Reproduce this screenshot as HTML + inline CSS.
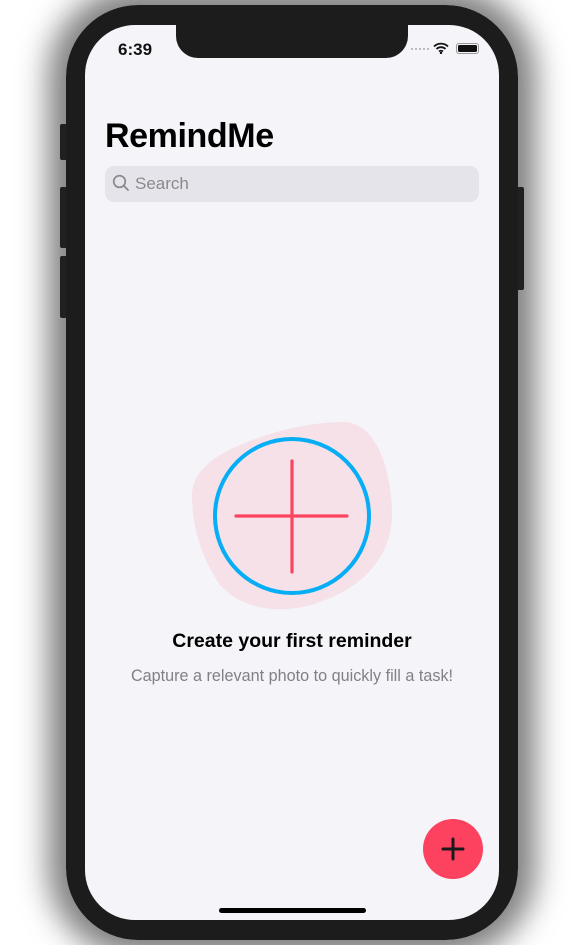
<!DOCTYPE html>
<html><head><meta charset="utf-8"><style>
*{margin:0;padding:0;box-sizing:border-box}
body{width:583px;height:945px;background:#fff;position:relative;overflow:hidden;font-family:"Liberation Sans",sans-serif}
.shadow{position:absolute;left:66px;top:5px;width:452px;height:935px;border-radius:72px;box-shadow:0 0 30px 18px rgba(0,0,0,0.5)}
.phone{position:absolute;left:66px;top:5px;width:452px;height:935px;border-radius:72px;background:#1c1c1c}
.btn{position:absolute;background:#202020;border-radius:2px}
.screen{position:absolute;left:85px;top:25px;width:414px;height:895px;border-radius:50px;background:#f4f4f9;overflow:hidden}
.notch{position:absolute;left:91px;top:0;width:232px;height:33px;background:#1c1c1c;border-radius:0 0 22px 22px}
</style></head><body>
<div class="shadow"></div>
<div class="btn" style="left:60px;top:124px;width:7px;height:36px"></div>
<div class="btn" style="left:60px;top:187px;width:7px;height:61px"></div>
<div class="btn" style="left:60px;top:256px;width:7px;height:62px"></div>
<div class="btn" style="left:517px;top:187px;width:7px;height:103px"></div>
<div class="phone"></div>
<div class="screen">
<div class="notch"></div>
<div style="position:absolute;left:33px;top:15px;font-size:17px;font-weight:bold;color:#111">6:39</div>
<div style="position:absolute;left:326px;top:23px;width:18px;height:2px;border-top:2px dotted #bbb"></div>
<svg style="position:absolute;left:348px;top:17px" width="16" height="12" viewBox="0 0 16 12"><path d="M1 4.5a10 10 0 0 1 14 0M3.5 7a6.5 6.5 0 0 1 9 0M6 9.5a3 3 0 0 1 4 0" stroke="#111" stroke-width="1.8" fill="none"/><circle cx="8" cy="11" r="1.2" fill="#111"/></svg>
<div style="position:absolute;left:371px;top:18px;width:23px;height:11px;border:1px solid #999;border-radius:3px;padding:1px"><div style="width:100%;height:100%;background:#111;border-radius:1.5px"></div></div>
<div style="position:absolute;left:20px;top:92px;font-size:34px;font-weight:bold;color:#000;letter-spacing:-0.4px">RemindMe</div>
<div style="position:absolute;left:20px;top:141px;width:374px;height:36px;background:#e4e4ea;border-radius:9px"></div>
<svg style="position:absolute;left:27px;top:149px" width="18" height="18" viewBox="0 0 18 18"><circle cx="7.5" cy="7.5" r="5.8" stroke="#8a8a8e" stroke-width="1.7" fill="none"/><path d="M11.8 11.8L16 16" stroke="#8a8a8e" stroke-width="1.8" stroke-linecap="round"/></svg>
<div style="position:absolute;left:50px;top:149px;font-size:17px;color:#8a8a8e">Search</div>
<svg style="position:absolute;left:0;top:0" width="414" height="895">
<path d="M255 397 C290 395 305 440 307 485 C308 530 280 560 240 575 C205 590 160 588 135 560 C115 530 107 500 107 470 C108 445 130 430 160 418 C195 404 225 398 255 397Z" fill="#f6e1e8"/>
<circle cx="207" cy="491" r="77" stroke="#07aef5" stroke-width="4" fill="none"/>
<path d="M151 491H262M207 436V547" stroke="#fb4460" stroke-width="3.2" stroke-linecap="round"/>
</svg>
<div style="position:absolute;left:0;width:414px;top:605px;text-align:center;font-size:19.5px;font-weight:bold;color:#000">Create your first reminder</div>
<div style="position:absolute;left:0;width:414px;top:642px;text-align:center;font-size:16.2px;color:#808085">Capture a relevant photo to quickly fill a task!</div>
<div style="position:absolute;left:338px;top:794px;width:60px;height:60px;border-radius:50%;background:#fd4260"></div>
<svg style="position:absolute;left:338px;top:794px" width="60" height="60"><path d="M30 20V40M20 30H40" stroke="#1a1a1a" stroke-width="3" stroke-linecap="round"/></svg>
<div style="position:absolute;left:134px;top:883px;width:147px;height:5px;border-radius:3px;background:#000"></div>
</div>
</body></html>
